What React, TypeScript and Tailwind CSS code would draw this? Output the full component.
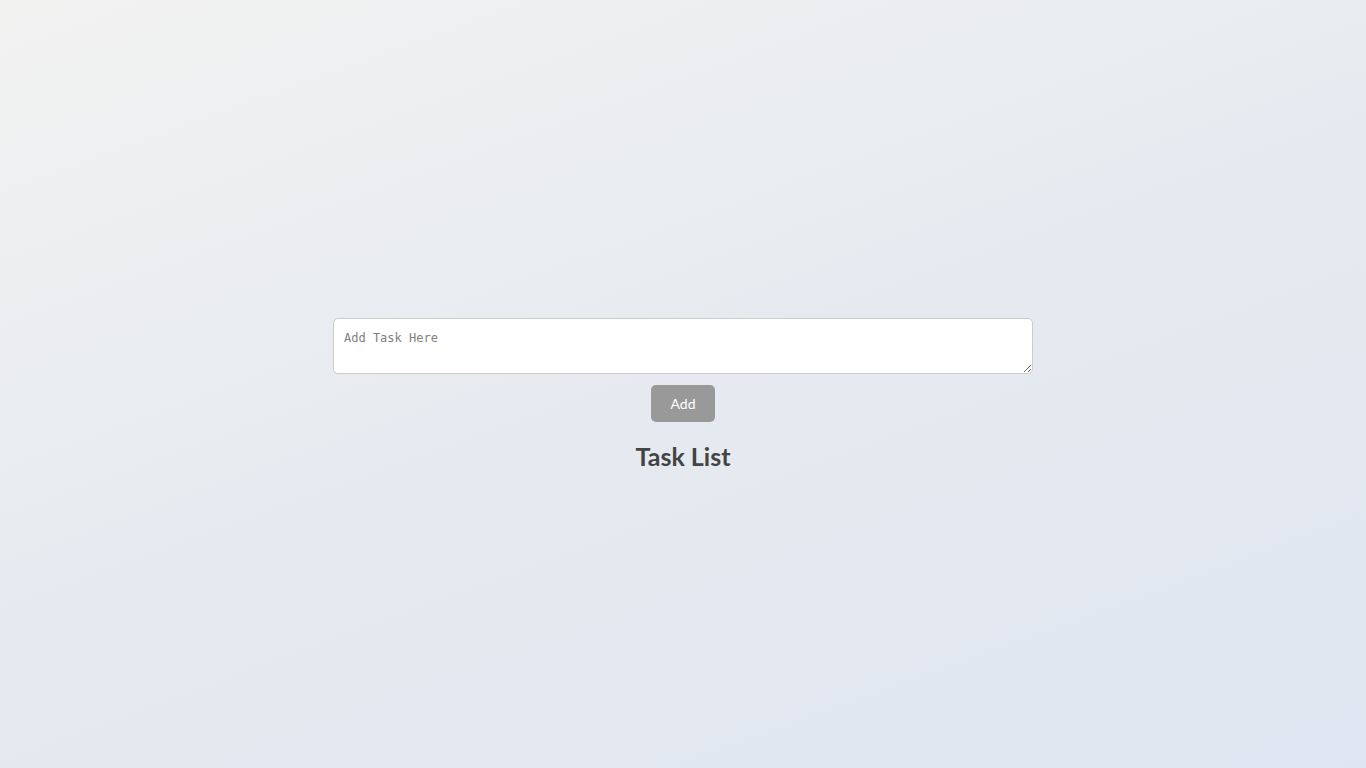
export default function App() {
  return (
    <div className="min-h-screen w-full bg-[linear-gradient(160deg,#f2f2f1_0%,#e6eaf0_50%,#dfe6f1_100%)] font-['Lato',sans-serif]">
      <div className="flex flex-col items-center pt-[318px]">
        <textarea
          placeholder="Add Task Here"
          className="w-[700px] h-[56px] rounded-[5px] border border-[#cccccc] bg-white px-[10px] pt-[11px] pb-[7px] font-['DejaVu_Sans_Mono',monospace] text-[12px] leading-[16px] text-[#333] placeholder:text-[#808080] outline-none"
        />
        <button className="mt-[11px] w-[64px] h-[37px] rounded-[5px] bg-[#999999] text-[14px] text-white">
          Add
        </button>
        <h2 className="mt-[18px] text-[25px] font-bold leading-[32px] text-[#444444]">
          Task List
        </h2>
      </div>
    </div>
  );
}
